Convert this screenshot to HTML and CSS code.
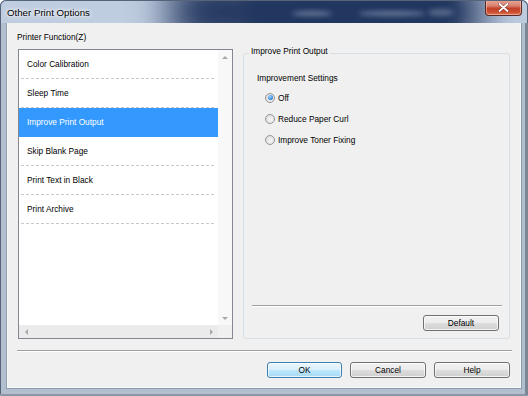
FILE: index.html
```html
<!DOCTYPE html>
<html>
<head>
<meta charset="utf-8">
<title>Other Print Options</title>
<link rel="stylesheet" href="styles.css">
</head>
<body>
<div class="window">
  <div class="titlebar">
    <div class="tb-dark"></div>
    <div class="tb-mid"></div>
    <span class="title">Other Print Options</span>
    <span class="smudge smudge-a"></span>
    <span class="smudge smudge-b"></span>
    <span class="smudge smudge-c"></span>
    <div class="close-btn">
      <svg width="11" height="9" viewBox="0 0 11 9">
        <path d="M1.5 1 L9.5 8 M9.5 1 L1.5 8" stroke="#5a1a10" stroke-width="3" stroke-linecap="round" opacity="0.55"/>
        <path d="M1.5 1 L9.5 8 M9.5 1 L1.5 8" stroke="#ffffff" stroke-width="1.8" stroke-linecap="round"/>
      </svg>
    </div>
  </div>
  <div class="frame-body">
    <div class="content">
      <div class="main">
        <div class="left-col">
          <div class="label">Printer Function(Z)</div>
          <div class="listbox">
            <ul class="items">
              <li class="item">Color Calibration</li>
              <li class="item">Sleep Time</li>
              <li class="item selected">Improve Print Output</li>
              <li class="item">Skip Blank Page</li>
              <li class="item">Print Text in Black</li>
              <li class="item">Print Archive</li>
            </ul>
            <div class="vscroll">
              <span class="sbtn"><span class="arrow up"></span></span>
              <span class="sbtn"><span class="arrow down"></span></span>
            </div>
            <div class="hscroll">
              <span class="sbtn"><span class="arrow left"></span></span>
              <span class="sbtn"><span class="arrow right"></span></span>
            </div>
            <div class="corner"></div>
          </div>
        </div>
        <fieldset class="group">
          <legend class="legend">Improve Print Output</legend>
          <div class="group-body">
            <div class="subhead">Improvement Settings</div>
            <div class="radios">
              <div class="radio-row"><span class="radio checked"></span><span>Off</span></div>
              <div class="radio-row"><span class="radio"></span><span>Reduce Paper Curl</span></div>
              <div class="radio-row"><span class="radio"></span><span>Improve Toner Fixing</span></div>
            </div>
          </div>
          <div class="group-footer">
            <div class="sep sep-inner"></div>
            <button class="btn btn-default">Default</button>
          </div>
        </fieldset>
      </div>
      <div class="sep sep-bottom"></div>
      <div class="buttons">
        <button class="btn btn-ok">OK</button>
        <button class="btn btn-wide">Cancel</button>
        <button class="btn btn-wide">Help</button>
      </div>
    </div>
  </div>
</div>
</body>
</html>
```
FILE: styles.css
```css
* { box-sizing: border-box; }
html, body { margin: 0; padding: 0; background: #ffffff; }
body {
  font-family: "Liberation Sans", Arial, sans-serif;
  font-size: 8.3px;
  color: #000;
}
.window {
  width: 528px;
  height: 396px;
  display: flex;
  flex-direction: column;
  border-radius: 6px 6px 2px 2px;
  overflow: hidden;
  background-color: #b2bfcf;
  box-shadow: inset 0 0 0 1px #56647a;
}
.titlebar {
  height: 23px;
  flex: none;
  display: flex;
  align-items: flex-start;
  position: relative;
  overflow: hidden;
  background-color: #bfcde0;
  border-radius: 6px 6px 0 0;
  border: 1px solid #56647a;
  border-bottom: none;
}
.tb-dark {
  position: absolute;
  left: 170px;
  width: 310px;
  top: -24px;
  height: 70px;
  background-color: #1d315a;
  filter: blur(20px);
}
.tb-mid {
  position: absolute;
  left: 245px;
  width: 210px;
  top: -10px;
  height: 44px;
  background-color: #22375f;
  filter: blur(8px);
}
.title {
  margin: 6px 0 0 6px;
  font-size: 9.7px;
  line-height: 12px;
  color: #000;
  position: relative;
  z-index: 2;
  text-shadow: 0 0 3px #fff, 0 0 5px rgba(255,255,255,0.9), 0 0 8px rgba(255,255,255,0.7);
}
.smudge {
  position: absolute;
  height: 5px;
  top: 10px;
  border-radius: 50%;
  background: #b9c8e1;
  opacity: 0.45;
  filter: blur(2.5px);
  z-index: 1;
}
.smudge-a { left: 291px; width: 40px; }
.smudge-b { left: 357px; width: 68px; }
.smudge-c { left: 427px; width: 26px; top: 8px; height: 7px; opacity: 0.35; }
.close-btn {
  margin: -1px 5px 0 auto;
  width: 37px;
  height: 16px;
  border: 1px solid #5a2a24;
  border-top: none;
  border-radius: 0 0 4px 4px;
  background: linear-gradient(to bottom, #e9a99a 0%, #d9816d 40%, #c2422a 55%, #cc4d2f 80%, #e07b55 100%);
  box-shadow: inset 0 0 0 1px rgba(255,210,200,0.5);
  display: flex;
  align-items: center;
  justify-content: center;
  position: relative;
  z-index: 2;
}
.frame-body {
  flex: 1;
  padding: 0 5px 7px 8px;
  display: flex;
  border-right: 3px solid #7d8794;
  border-bottom: 2px solid #8d96a2;
}
.content {
  flex: 1;
  background: #f0f0f0;
  padding: 8px 8px 0 9px;
  display: flex;
  flex-direction: column;
  box-shadow: 0 0 0 1px #f8f9fb, 0 0 0 2px #8f9aaa;
}
.main {
  display: flex;
  align-items: flex-start;
}
.left-col {
  width: 216px;
  flex: none;
}
.label {
  line-height: 12px;
  height: 12px;
}
.listbox {
  margin: 6px 0 0 1px;
  width: 215px;
  height: 290px;
  border: 1px solid #828790;
  background: #fff;
  display: grid;
  grid-template-columns: 199px 14px;
  grid-template-rows: 275px 13px;
}
.items {
  list-style: none;
  margin: 0;
  padding: 0;
  grid-column: 1;
  grid-row: 1;
}
.item {
  height: 29px;
  line-height: 28px;
  padding-left: 8px;
  background-image: repeating-linear-gradient(to right, #c8c8c8 0 3px, rgba(255,255,255,0) 3px 5px);
  background-size: 195px 1px;
  background-position: 2px 100%;
  background-repeat: no-repeat;
}
.item.selected {
  background: #3399ff;
  color: #fff;
}
.vscroll {
  grid-column: 2;
  grid-row: 1;
  background: #f8f8f8;
  display: flex;
  flex-direction: column;
  justify-content: space-between;
}
.hscroll {
  grid-column: 1;
  grid-row: 2;
  background: #ebebeb;
  display: flex;
  justify-content: space-between;
}
.corner {
  grid-column: 2;
  grid-row: 2;
  background: #f0f0f0;
}
.sbtn {
  width: 14px;
  height: 14px;
  display: flex;
  align-items: center;
  justify-content: center;
}
.hscroll .sbtn { height: 13px; }
.arrow { width: 0; height: 0; display: block; }
.arrow.up { border-left: 3px solid transparent; border-right: 3px solid transparent; border-bottom: 3px solid #a8a8a8; }
.arrow.down { border-left: 3px solid transparent; border-right: 3px solid transparent; border-top: 3px solid #a8a8a8; }
.arrow.left { border-top: 3px solid transparent; border-bottom: 3px solid transparent; border-right: 3px solid #a8a8a8; }
.arrow.right { border-top: 3px solid transparent; border-bottom: 3px solid transparent; border-left: 3px solid #a8a8a8; }

.group {
  margin: 14px 0 0 10px;
  padding: 0;
  min-width: 0;
  width: 267px;
  height: 294px;
  border: 1px solid #d5dfe5;
  border-radius: 3px;
  display: flex;
  flex-direction: column;
}
.legend {
  margin-left: 5px;
  padding: 0 2px 4px 2px;
  line-height: 12px;
}
.group-body {
  padding: 11px 0 0 13px;
}
.subhead {
  line-height: 12px;
}
.radios {
  margin-top: 3px;
  padding-left: 8px;
}
.radio-row {
  height: 21px;
  display: flex;
  align-items: center;
}
.radio {
  width: 10px;
  height: 10px;
  border-radius: 50%;
  border: 1px solid #959595;
  background: radial-gradient(circle at 60% 60%, #f6f6f6 0%, #e4e4e4 60%, #d4d4d4 100%);
  margin-right: 3px;
  display: flex;
  align-items: center;
  justify-content: center;
}
.radio.checked::after {
  content: "";
  width: 5px;
  height: 5px;
  border-radius: 50%;
  background: radial-gradient(circle at 40% 35%, #a8dbff 0%, #3f8fe0 55%, #1a5fb4 100%);
}
.group-footer {
  margin-top: auto;
  padding: 0 10px 7px 8px;
  display: flex;
  flex-direction: column;
  align-items: flex-end;
}
.sep {
  height: 2px;
  border-top: 1px solid #a0a0a0;
  border-bottom: 1px solid #ffffff;
}
.sep-inner {
  width: calc(100% + 3px);
  margin-right: -3px;
}
.btn {
  font-family: "Liberation Sans", Arial, sans-serif;
  font-size: 8.3px;
  color: #000;
  height: 16px;
  padding: 0;
  border: 1px solid #707070;
  border-radius: 3px;
  background: linear-gradient(to bottom, #f2f2f2 0%, #ebebeb 50%, #dddddd 51%, #cfcfcf 100%);
  box-shadow: inset 0 0 0 1px rgba(255,255,255,0.75);
  line-height: 14px;
}
.btn-default {
  margin-top: 8px;
  width: 76px;
}
.sep-bottom {
  margin-top: 11px;
}
.buttons {
  margin-top: 10px;
  display: flex;
  justify-content: flex-end;
  gap: 8px;
  padding-right: 2px;
}
.btn-ok {
  width: 75px;
  border-color: #3c7fb1;
  background: linear-gradient(to bottom, #eaf6fd 0%, #d9f0fc 50%, #bee6fd 51%, #a7d9f5 100%);
  box-shadow: inset 0 0 0 1px rgba(255,255,255,0.7);
}
.btn-wide { width: 76px; }
```
